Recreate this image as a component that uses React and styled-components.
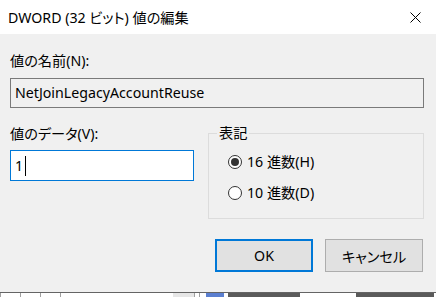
import React from "react";
import styled, { createGlobalStyle } from "styled-components";

const GlobalStyle = createGlobalStyle`
  html, body {
    margin: 0;
    padding: 0;
    background: #ffffff;
  }
  body {
    font-family: "Noto Sans", "Noto Sans CJK JP", sans-serif;
    font-size: 14.2px;
    font-feature-settings: "palt";
    color: #000;
  }
`;

const Window = styled.div`
  width: 436px;
  height: 297px;
  display: flex;
  flex-direction: column;
  overflow: hidden;
`;

const TitleBar = styled.div`
  height: 34px;
  flex: none;
  display: flex;
  align-items: center;
  justify-content: space-between;
  padding: 0 15px 0 8px;
  background: #ffffff;
  font-size: 14.2px;
  color: #000;
`;

const CloseButton = styled.svg`
  width: 11px;
  height: 11px;
  display: block;
`;

const Body = styled.div`
  height: 259px;
  flex: none;
  box-sizing: border-box;
  background: #f0f0f0;
  border-bottom: 1px solid #646464;
  padding: 17px 12px 0 10px;
  display: flex;
  flex-direction: column;
`;

const Label = styled.div`
  line-height: 20px;
  height: 20px;
  white-space: nowrap;
`;

const Field = styled.div`
  box-sizing: border-box;
  height: ${(p) => (p.$h ? p.$h : 30)}px;
  margin-top: ${(p) => p.$mt || 0}px;
  border: 1px solid ${(p) => (p.$focus ? "#0078d7" : "#7a7a7a")};
  background: ${(p) => (p.$focus ? "#ffffff" : "#f0f0f0")};
  display: flex;
  align-items: center;
  padding-left: 4px;
  line-height: 20px;
`;

const Caret = styled.span`
  display: inline-block;
  width: 1px;
  height: 20px;
  background: #000;
  margin-left: 2px;
`;

const Row = styled.div`
  display: flex;
  gap: 14px;
  margin-top: 16px;
`;

const Column = styled.div`
  width: 184px;
  display: flex;
  flex-direction: column;
`;

const Group = styled.fieldset`
  flex: 1;
  margin: -1px 0 0 0;
  padding: 9px 0 0 8px;
  height: 96px;
  box-sizing: border-box;
  border: 1px solid #dcdcdc;
  min-width: 0;
  display: flex;
  flex-direction: column;
  gap: 11px;
`;

const Legend = styled.legend`
  padding: 0 2px;
  margin: 0;
  line-height: 20px;
`;

const RadioRow = styled.label`
  display: flex;
  align-items: center;
  gap: 5px;
  height: 20px;
  line-height: 20px;
  margin-left: 11px;
`;

const RadioCircle = styled.span`
  width: 14px;
  height: 14px;
  box-sizing: border-box;
  border-radius: 50%;
  border: 1px solid #333333;
  background: #ffffff;
  display: flex;
  align-items: center;
  justify-content: center;

  &::after {
    content: "";
    width: 8px;
    height: 8px;
    border-radius: 50%;
    background: ${(p) => (p.$checked ? "#333333" : "transparent")};
  }
`;

const Buttons = styled.div`
  display: flex;
  justify-content: flex-end;
  gap: 12px;
  margin-top: 20px;
  margin-right: 1px;
`;

const Button = styled.div`
  width: 98px;
  height: 33px;
  box-sizing: border-box;
  background: #e1e1e1;
  border: ${(p) => (p.$default ? "2px solid #0078d7" : "1px solid #adadad")};
  display: flex;
  align-items: center;
  justify-content: center;
`;

const Behind = styled.div`
  flex: 1;
  display: flex;
  align-items: stretch;
  background: #ffffff;
`;

const Cell = styled.span`
  width: ${(p) => p.$w}px;
  flex: none;
  box-sizing: border-box;
  border-left: ${(p) => (p.$line ? "1px solid #a0a0a0" : "none")};
  background: ${(p) => p.$bg || "transparent"};
`;

const Ink = styled.span`
  width: ${(p) => p.$w}px;
  margin-left: ${(p) => p.$ml || 0}px;
  flex: none;
  background: ${(p) => p.$c || "#5a5a5a"};
`;

export default function App() {
  return (
    <>
      <GlobalStyle />
      <Window>
        <TitleBar>
          <span>DWORD (32 ビット) 値の編集</span>
          <CloseButton viewBox="0 0 11 11">
            <path d="M0.5 0.5 L10.5 10.5 M10.5 0.5 L0.5 10.5" stroke="#000" strokeWidth="1" fill="none" />
          </CloseButton>
        </TitleBar>
        <Body>
          <Label>値の名前(N):</Label>
          <Field $mt={7}>NetJoinLegacyAccountReuse</Field>
          <Row>
            <Column>
              <Label>値のデータ(V):</Label>
              <Field $mt={6} $h={31} $focus>
                1<Caret />
              </Field>
            </Column>
            <Group>
              <Legend>表記</Legend>
              <RadioRow>
                <RadioCircle $checked />
                16 進数(H)
              </RadioRow>
              <RadioRow>
                <RadioCircle />
                10 進数(D)
              </RadioRow>
            </Group>
          </Row>
          <Buttons>
            <Button $default>OK</Button>
            <Button>キャンセル</Button>
          </Buttons>
        </Body>
        <Behind>
          <Cell $w={20} $line />
          <Cell $w={20} $line />
          <Cell $w={20} $line />
          <Cell $w={113} $line />
          <Cell $w={21} $bg="#e6e6e6" />
          <Cell $w={5} $line />
          <Cell $w={7} $line />
          <Ink $w={18} $c="#5b7fd0" />
          <Ink $w={72} $ml={4} />
          <Ink $w={78} $ml={56} />
        </Behind>
      </Window>
    </>
  );
}
